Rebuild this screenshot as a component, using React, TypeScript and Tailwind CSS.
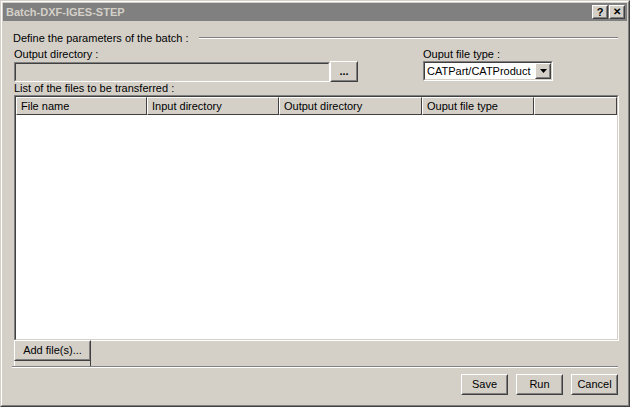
import React from 'react'

const font = { fontFamily: '"Liberation Sans", Arial, sans-serif' }

function Raised({ className = '', children }: { className?: string; children?: React.ReactNode }) {
  return (
    <div className={`border border-t-white border-l-white border-r-[#404040] border-b-[#404040] bg-[#d4d0c8] ${className}`}>
      <div className="h-full w-full border border-t-[#d4d0c8] border-l-[#d4d0c8] border-r-[#808080] border-b-[#808080] flex items-center justify-center">
        {children}
      </div>
    </div>
  )
}

function Sunken({ className = '', children }: { className?: string; children?: React.ReactNode }) {
  return (
    <div className={`border border-t-[#808080] border-l-[#808080] border-r-white border-b-white ${className}`}>
      <div className="h-full w-full border border-t-[#404040] border-l-[#404040] border-r-[#d4d0c8] border-b-[#d4d0c8] bg-white">
        {children}
      </div>
    </div>
  )
}

function HeaderCell({ w, label }: { w: string; label?: string }) {
  return (
    <div className={`${w} h-full shrink-0 border-r border-r-[#404040] border-b border-b-[#404040] border-t border-t-white border-l border-l-white bg-[#d4d0c8] flex items-center px-[4px] text-[11px] text-black`}>
      {label}
    </div>
  )
}

export default function App() {
  return (
    <div style={font} className="w-[630px] h-[407px] bg-[#d4d0c8] border border-t-[#d4d0c8] border-l-[#d4d0c8] border-r-[#404040] border-b-[#404040] select-none">
      <div className="h-full w-full border border-t-white border-l-white border-r-[#808080] border-b-[#808080] p-[1px] flex flex-col">
        {/* title bar */}
        <div className="h-[18px] bg-[#808080] flex items-center justify-between pl-[3px] pr-[2px]">
          <span className="text-[11px] font-bold text-[#d4d0c8]">Batch-DXF-IGES-STEP</span>
          <div className="flex gap-[1px]">
            <Raised className="w-[16px] h-[14px]"><span className="text-[11px] font-bold leading-none">?</span></Raised>
            <Raised className="w-[16px] h-[14px]"><span className="text-[10px] font-bold leading-none">✕</span></Raised>
          </div>
        </div>

        <div className="flex-1 flex flex-col pl-[9px] pr-[8px]">
          <div className="flex items-center mt-[10px] h-[14px]">
            <span className="text-[11px] text-black pl-[1px]">Define the parameters of the batch :</span>
            <div className="flex-1 ml-[10px] mr-[1px] flex flex-col">
              <div className="h-px bg-[#808080]" />
              <div className="h-px bg-white" />
            </div>
          </div>

          <div className="flex mt-[2px]">
            <div className="flex flex-col pl-[2px]">
              <span className="text-[11px] text-black leading-[14px]">Output directory :</span>
              <div className="flex items-start mt-[1px]">
                <div className="w-[316px] h-[20px] border border-t-[#808080] border-l-[#808080] border-r-white border-b-white">
                  <div className="h-full w-full border border-t-[#404040] border-l-[#404040] border-r-[#d4d0c8] border-b-[#d4d0c8] bg-[#d4d0c8]" />
                </div>
                <Raised className="w-[28px] h-[21px] -mt-[1px]"><span className="text-[11px] font-bold leading-none">...</span></Raised>
              </div>
            </div>
            <div className="flex flex-col ml-[65px]">
              <span className="text-[11px] text-black leading-[14px]">Ouput file type :</span>
              <Sunken className="w-[130px] h-[20px] mt-[0px]">
                <div className="flex h-full items-center">
                  <span className="flex-1 text-[11px] pl-[2px] text-black">CATPart/CATProduct</span>
                  <Raised className="w-[16px] h-[16px]">
                    <svg width="7" height="4" viewBox="0 0 7 4"><path d="M0 0h7L3.5 4z" fill="black" /></svg>
                  </Raised>
                </div>
              </Sunken>
            </div>
          </div>

          <span className="text-[11px] text-black leading-[14px] -mt-[1px] pl-[2px]">List of the files to be transferred :</span>

          <div className="flex-1 flex flex-col">
            <Sunken className="ml-[2px] h-[246px]">
              <div className="flex h-[18px]">
                <HeaderCell w="w-[131px]" label="File name" />
                <HeaderCell w="w-[132px]" label="Input directory" />
                <HeaderCell w="w-[143px]" label="Output directory" />
                <HeaderCell w="w-[112px]" label="Ouput file type" />
                <HeaderCell w="flex-1" />
              </div>
            </Sunken>
            <div className="flex flex-col ml-[2px]">
              <div className="h-[20px] flex">
                <Raised className="w-[77px] h-[21px] -mt-[1px]"><span className="text-[11px]">Add file(s)...</span></Raised>
              </div>
              <div className="h-[5px] w-[77px] border-l border-l-white border-r border-r-[#404040] bg-[#d4d0c8]" />
              <div className="flex flex-col -ml-[2px] mr-[1px]">
                <div className="h-px bg-[#808080]" />
                <div className="h-px bg-white" />
              </div>
            </div>
            <div className="flex justify-end gap-[8px] mt-[6px] mr-[1px]">
              <Raised className="w-[47px] h-[21px]"><span className="text-[11px]">Save</span></Raised>
              <Raised className="w-[47px] h-[21px]"><span className="text-[11px]">Run</span></Raised>
              <Raised className="w-[47px] h-[21px]"><span className="text-[11px]">Cancel</span></Raised>
            </div>
          </div>
        </div>
      </div>
    </div>
  )
}
